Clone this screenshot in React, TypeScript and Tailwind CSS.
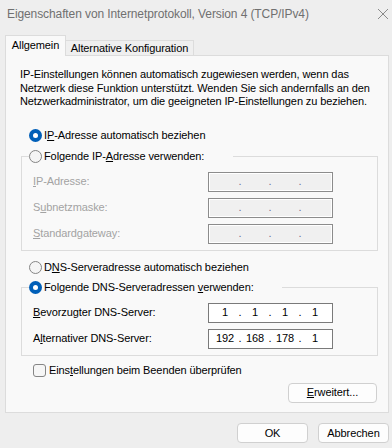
import React from 'react';

const Radio = ({ checked }: { checked?: boolean }) =>
    checked ? (
        <span className="flex h-[13px] w-[13px] shrink-0 items-center justify-center rounded-full bg-[#005fb8]">
            <span className="h-[5px] w-[5px] rounded-full bg-white" />
        </span>
    ) : (
        <span className="h-[13px] w-[13px] shrink-0 rounded-full border border-[#858585] bg-[#f5f5f5]" />
    );

const IpBox = ({ parts, disabled }: { parts?: string[]; disabled?: boolean }) => {
    const vals = parts ?? ['', '', '', ''];
    return (
        <div
            className={
                disabled
                    ? 'flex h-[20px] w-[125px] items-center border border-[#8c8c8c] bg-[#f0f0f0] pl-[3px] shadow-[inset_1px_1px_0_#ffffff,inset_-1px_-1px_0_#ffffff]'
                    : 'flex h-[20px] w-[125px] items-center border border-[#7a7a7a] bg-white pl-[3px]'
            }
        >
            {vals.map((v, i) => (
                <React.Fragment key={i}>
                    {i > 0 && (
                        <span className={disabled ? 'w-[4px] text-center text-[#6f6f90]' : 'w-[4px] text-center'}>.</span>
                    )}
                    <span className="w-[26px] text-center">{v}</span>
                </React.Fragment>
            ))}
        </div>
    );
};

const FieldRow = ({ label, parts, disabled }: { label: React.ReactNode; parts?: string[]; disabled?: boolean }) => (
    <div className="flex h-[20px] items-center">
        <span className={disabled ? 'w-[175px] text-[#a3a3a3]' : 'w-[175px]'}>{label}</span>
        <IpBox parts={parts} disabled={disabled} />
    </div>
);

const App = () => {
    return (
        <div className="flex h-[448px] w-[392px] flex-col bg-[#eeeeee] font-['Liberation_Sans',Arial,sans-serif] text-[11px] tracking-[-0.1px] text-black">
            {/* title bar */}
            <div className="flex h-[28px] shrink-0 items-center justify-between pl-[7px] pr-[2px]">
                <span className="text-[12px] text-[#707070]">Eigenschaften von Internetprotokoll, Version 4 (TCP/IPv4)</span>
                <svg width="12" height="12" viewBox="0 0 12 12" className="mr-[1px]">
                    <path d="M1 1 L11 11 M11 1 L1 11" stroke="#8a8a8a" strokeWidth="1" />
                </svg>
            </div>

            {/* tabs */}
            <div className="relative z-10 -mb-px flex h-[28px] shrink-0 items-end pl-[5px]">
                <div className="flex h-[21px] w-[61px] items-center justify-center border-x border-t border-[#dcdcdc] bg-[#f9f9f9] pb-[1px]">
                    Allgemein
                </div>
                <div className="mb-px flex h-[15px] w-[128px] items-center justify-center border-r border-t border-[#dcdcdc] bg-[#efefef]">
                    Alternative Konfiguration
                </div>
            </div>

            {/* panel */}
            <div className="ml-[5px] flex h-[358px] w-[384px] shrink-0 flex-col border border-[#dcdcdc] bg-[#f9f9f9]">
                <p className="pl-[14px] pt-[12px] leading-[13.5px]">
                    IP-Einstellungen können automatisch zugewiesen werden, wenn das
                    <br />
                    Netzwerk diese Funktion unterstützt. Wenden Sie sich andernfalls an den
                    <br />
                    Netzwerkadministrator, um die geeigneten IP-Einstellungen zu beziehen.
                </p>

                <div className="ml-[23px] mt-[20px] flex h-[14px] items-center gap-[2px]">
                    <Radio checked />
                    <span>
                        I<u>P</u>-Adresse automatisch beziehen
                    </span>
                </div>

                <fieldset className="ml-[15px] mt-[7px] w-[357px] border border-[#dcdcdc] px-[7px] pb-[6px]">
                    <legend className="w-[204px]">
                        <span className="flex h-[14px] items-center gap-[2px]">
                            <Radio />
                            <span>
                                Folgende IP-<u>A</u>dresse verwenden:
                            </span>
                        </span>
                    </legend>
                    <div className="flex flex-col gap-[6px] pl-[4px] pt-[8px]">
                        <FieldRow disabled label={<><u>I</u>P-Adresse:</>} />
                        <FieldRow disabled label={<>S<u>u</u>bnetzmaske:</>} />
                        <FieldRow disabled label={<><u>S</u>tandardgateway:</>} />
                    </div>
                </fieldset>

                <div className="ml-[23px] mt-[10px] flex h-[14px] items-center gap-[2px]">
                    <Radio />
                    <span>
                        D<u>N</u>S-Serveradresse automatisch beziehen
                    </span>
                </div>

                <fieldset className="ml-[15px] mt-[6px] w-[357px] border border-[#dcdcdc] px-[7px] pb-[6px]">
                    <legend className="w-[253px]">
                        <span className="flex h-[14px] items-center gap-[2px]">
                            <Radio checked />
                            <span>
                                Folgende DNS-Serveradressen <u>v</u>erwenden:
                            </span>
                        </span>
                    </legend>
                    <div className="flex flex-col gap-[6px] pl-[4px] pt-[8px]">
                        <FieldRow label={<><u>B</u>evorzugter DNS-Server:</>} parts={['1', '1', '1', '1']} />
                        <FieldRow label={<>A<u>l</u>ternativer DNS-Server:</>} parts={['192', '168', '178', '1']} />
                    </div>
                </fieldset>

                <div className="ml-[27px] mt-[8px] flex h-[14px] items-center gap-[3px]">
                    <span className="h-[13px] w-[13px] rounded-[3px] border border-[#858585] bg-[#f6f6f6]" />
                    <span>
                        Eins<u>t</u>ellungen beim Beenden überprüfen
                    </span>
                </div>

                <button className="mr-[11px] mt-[5px] h-[20px] w-[89px] self-end rounded-[4px] border border-[#d0d0d0] bg-[#fdfdfd]">
                    <u>E</u>rweitert...
                </button>
            </div>

            {/* dialog buttons */}
            <div className="mt-[10px] flex justify-end gap-[10px] pr-[3px]">
                <button className="h-[20px] w-[71px] rounded-[4px] border border-[#d0d0d0] bg-[#fdfdfd]">OK</button>
                <button className="h-[20px] w-[71px] rounded-[4px] border border-[#d0d0d0] bg-[#fdfdfd]">Abbrechen</button>
            </div>
        </div>
    );
};

export default App;
